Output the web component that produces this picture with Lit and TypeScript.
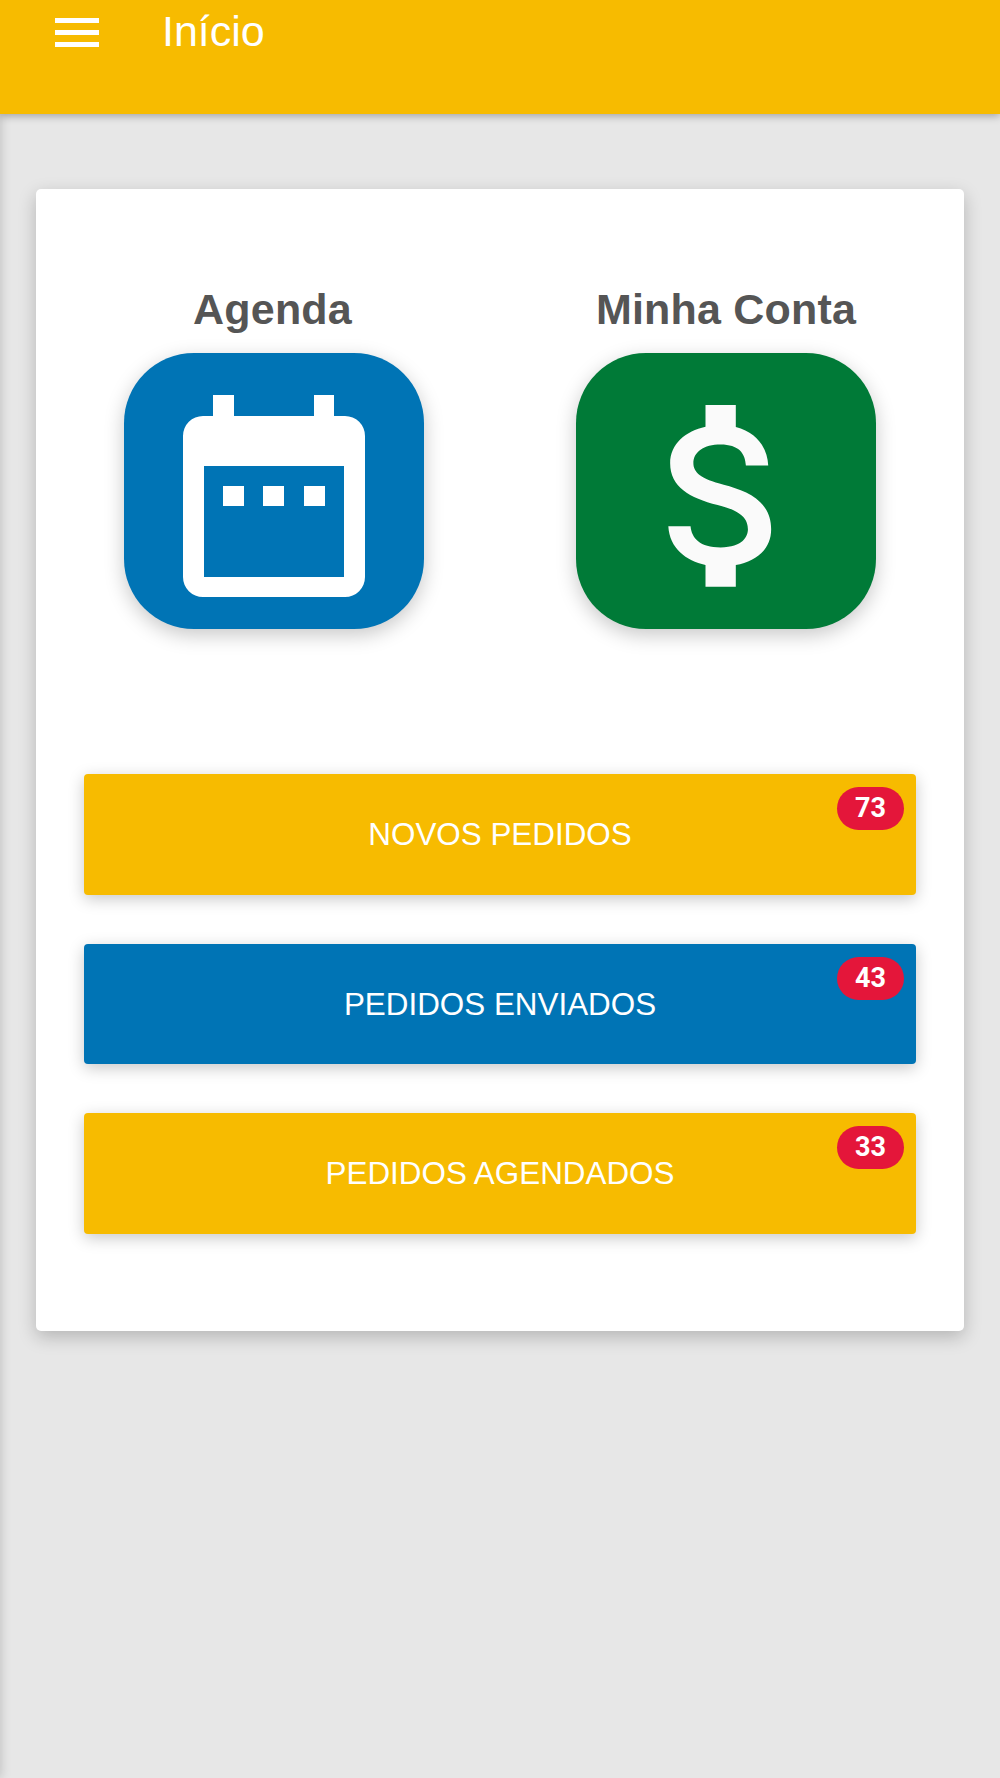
import { LitElement, html, css, svg } from 'lit';
import { customElement } from 'lit/decorators.js';

const orders = [
  { label: 'NOVOS PEDIDOS', count: 73, color: 'yellow' },
  { label: 'PEDIDOS ENVIADOS', count: 43, color: 'blue' },
  { label: 'PEDIDOS AGENDADOS', count: 33, color: 'yellow' },
];

const calendarIcon = svg`
  <path fill="#fff" d="M89 42h21v21h80V42h20v21h11a20 20 0 0 1 20 20v141a20 20 0 0 1-20 20H79a20 20 0 0 1-20-20V83a20 20 0 0 1 20-20h10z"/>
  <rect x="80" y="113" width="140" height="111" fill="#0074b5"/>
  <rect x="99" y="133" width="21" height="20" fill="#fff"/>
  <rect x="139" y="133" width="21" height="20" fill="#fff"/>
  <rect x="180" y="133" width="21" height="20" fill="#fff"/>
`;

const dollarIcon = svg`
  <g transform="translate(28.5 21.7) scale(10.1)">
    <path fill="#fafafa" d="M11.8 10.9c-2.27-.59-3-1.2-3-2.15 0-1.09 1.01-1.85 2.7-1.85 1.78 0 2.44.85 2.5 2.1h2.21c-.07-1.72-1.12-3.3-3.21-3.81V3h-3v2.16c-1.94.42-3.5 1.68-3.5 3.61 0 2.31 1.91 3.46 4.7 4.13 2.5.6 3 1.48 3 2.41 0 .69-.49 1.79-2.7 1.79-2.06 0-2.87-.92-2.98-2.1h-2.2c.12 2.19 1.76 3.42 3.68 3.83V21h3v-2.15c1.95-.37 3.5-1.5 3.5-3.55 0-2.84-2.43-3.81-4.7-4.4z"/>
  </g>
`;

@customElement('app-root')
export class AppRoot extends LitElement {
  static styles = css`
    :host {
      display: block;
      position: relative;
      height: 1778px;
      overflow: hidden;
      background-color: #e7e7e7;
      font-family: "Liberation Sans", Arial, sans-serif;
    }
    .drawer-edge {
      position: absolute;
      top: 0;
      bottom: 0;
      left: -20px;
      width: 20px;
      box-shadow: 0 0 12px rgba(0, 0, 0, 0.2);
    }
    header {
      position: relative;
      z-index: 1;
      display: flex;
      align-items: flex-start;
      height: 114px;
      box-sizing: border-box;
      padding-left: 55px;
      background-color: #f7bb00;
      color: #fff;
      box-shadow: 0 2px 8px rgba(0, 0, 0, 0.3);
    }
    .menu {
      display: flex;
      flex-direction: column;
      gap: 7px;
      width: 44px;
      margin-top: 18px;
    }
    .menu span {
      height: 5px;
      background-color: #fff;
    }
    h1 {
      margin: 7px 0 0 63px;
      font-size: 43px;
      font-weight: 400;
      line-height: 48px;
    }
    .card {
      position: relative;
      margin: 75px 36px 0;
      height: 1142px;
      box-sizing: border-box;
      padding: 94px 0 0;
      border-radius: 5px;
      background-color: #fff;
      box-shadow: 0 6px 18px rgba(0, 0, 0, 0.22);
    }
    .shortcuts {
      display: grid;
      grid-template-columns: 452px 452px;
      margin: 0 12px;
    }
    .shortcut {
      display: flex;
      flex-direction: column;
      align-items: center;
    }
    .shortcut h2 {
      margin: 0 0 17px;
      font-size: 43px;
      font-weight: 700;
      line-height: 53px;
      letter-spacing: 0.2px;
      color: #555;
    }
    .shortcut:first-child h2 {
      margin-left: -3px;
    }
    .tile {
      width: 300px;
      height: 276px;
      border-radius: 70px;
      box-shadow: 0 6px 20px rgba(0, 0, 0, 0.22);
    }
    .tile svg {
      display: block;
    }
    .tile.blue { background-color: #0074b5; }
    .tile.green { background-color: #007a37; }
    .orders {
      display: flex;
      flex-direction: column;
      gap: 49px;
      margin: 145px 48px 0;
    }
    .order {
      position: relative;
      display: flex;
      align-items: center;
      justify-content: center;
      height: 120.5px;
      box-sizing: border-box;
      padding-top: 2px;
      border-radius: 4px;
      color: #fff;
      font-size: 31.4px;
      box-shadow: 0 4px 16px rgba(0, 0, 0, 0.22);
    }
    .order.yellow { background-color: #f7bb00; }
    .order.blue { background-color: #0074b5; }
    .badge {
      position: absolute;
      top: 13px;
      right: 12px;
      width: 67px;
      height: 43px;
      border-radius: 22px;
      background-color: #e4163a;
      font-family: Roboto, sans-serif;
      font-size: 27px;
      font-weight: 700;
      line-height: 43px;
      text-align: center;
    }
  `;

  render() {
    return html`
      <div class="drawer-edge"></div>
      <header>
        <div class="menu"><span></span><span></span><span></span></div>
        <h1>Início</h1>
      </header>
      <div class="card">
        <div class="shortcuts">
          <div class="shortcut">
            <h2>Agenda</h2>
            <div class="tile blue">
              <svg width="300" height="276" viewBox="0 0 300 276">${calendarIcon}</svg>
            </div>
          </div>
          <div class="shortcut">
            <h2>Minha Conta</h2>
            <div class="tile green">
              <svg width="300" height="276" viewBox="0 0 300 276">${dollarIcon}</svg>
            </div>
          </div>
        </div>
        <div class="orders">
          ${orders.map(
            (o) => html`
              <div class="order ${o.color}">
                ${o.label}
                <span class="badge">${o.count}</span>
              </div>
            `
          )}
        </div>
      </div>
    `;
  }
}
